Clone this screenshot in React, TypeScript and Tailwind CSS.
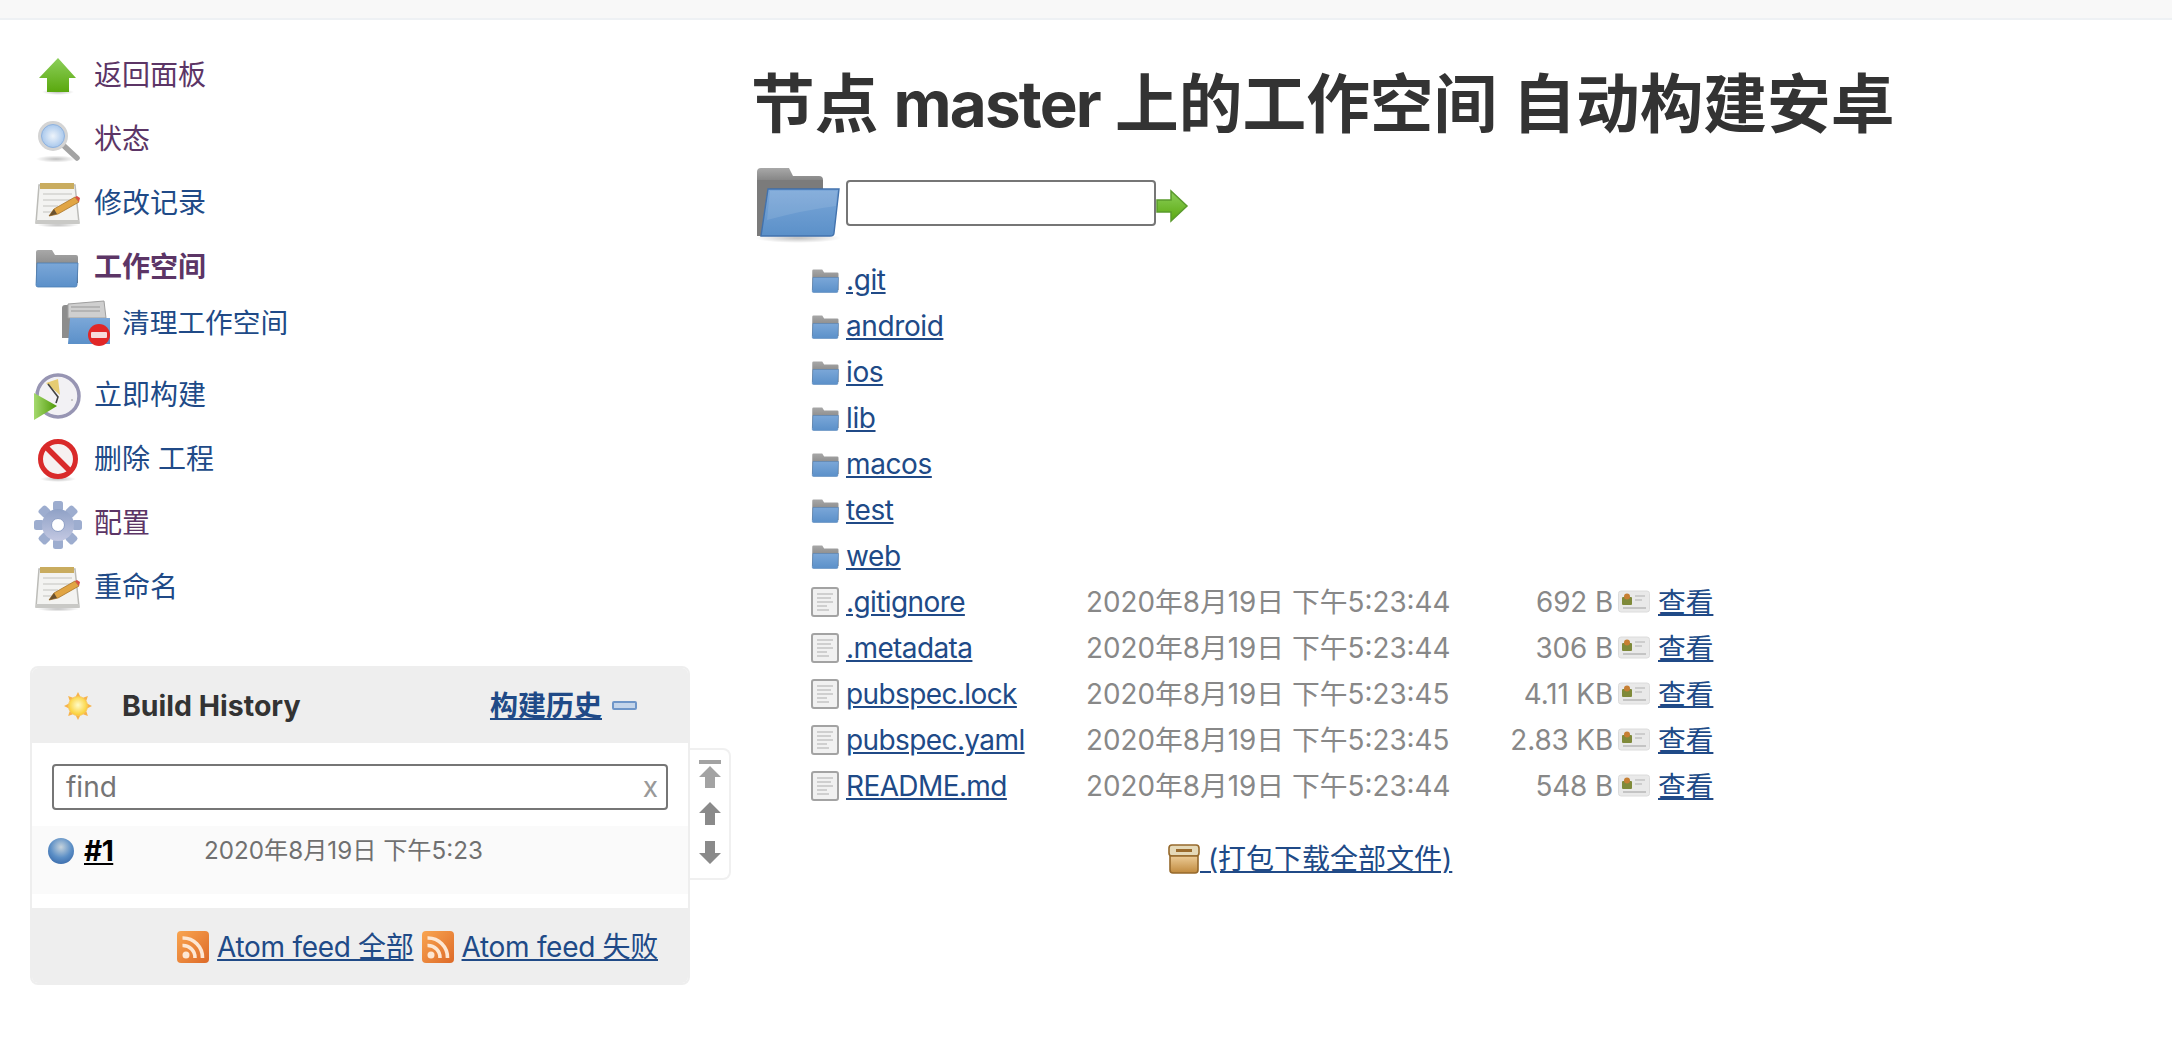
import React from "react";

const soft = "shrink-0 overflow-visible blur-[0.35px]";

function Defs() {
  return (
    <svg width="0" height="0" className="absolute">
      <defs>
        <linearGradient id="gGreen" x1="0" y1="0" x2="0" y2="1">
          <stop offset="0" stopColor="#8ccf5a" />
          <stop offset="1" stopColor="#5aa80e" />
        </linearGradient>
        <linearGradient id="gGreenH" x1="0" y1="0" x2="1" y2="0">
          <stop offset="0" stopColor="#a5d96e" />
          <stop offset="1" stopColor="#4e9a06" />
        </linearGradient>
        <linearGradient id="gFolder" x1="0" y1="0" x2="0" y2="1">
          <stop offset="0" stopColor="#7ba7d8" />
          <stop offset="1" stopColor="#5b90c9" />
        </linearGradient>
        <linearGradient id="gBack" x1="0" y1="0" x2="0" y2="1">
          <stop offset="0" stopColor="#a8a8a8" />
          <stop offset="1" stopColor="#6b6b6b" />
        </linearGradient>
        <linearGradient id="gGear" x1="0" y1="0" x2="0" y2="1">
          <stop offset="0" stopColor="#8fa1c6" />
          <stop offset="1" stopColor="#c3c8e2" />
        </linearGradient>
        <linearGradient id="gBox" x1="0" y1="0" x2="0" y2="1">
          <stop offset="0" stopColor="#eccb96" />
          <stop offset="1" stopColor="#c08a3e" />
        </linearGradient>
        <linearGradient id="gRss" x1="0" y1="0" x2="1" y2="1">
          <stop offset="0" stopColor="#f9a550" />
          <stop offset="1" stopColor="#dd6a28" />
        </linearGradient>
        <radialGradient id="gSun" cx="0.5" cy="0.45" r="0.5">
          <stop offset="0" stopColor="#fffbc8" />
          <stop offset="1" stopColor="#fbd23c" />
        </radialGradient>
        <radialGradient id="gLens" cx="0.5" cy="0.5" r="0.5">
          <stop offset="0" stopColor="#eef4fb" />
          <stop offset="1" stopColor="#a9c8ec" />
        </radialGradient>
        <radialGradient id="gShadow" cx="0.5" cy="0.5" r="0.5">
          <stop offset="0" stopColor="#000" stopOpacity="0.25" />
          <stop offset="1" stopColor="#000" stopOpacity="0" />
        </radialGradient>
      </defs>
    </svg>
  );
}

function UpIcon() {
  return (
    <svg width="48" height="48" viewBox="0 0 48 48" className={soft}>
      <ellipse cx="24" cy="41" rx="16" ry="3" fill="url(#gShadow)" />
      <path d="M24 7 L42 27 H35 V41 H13 V27 H5 Z" fill="url(#gGreen)" />
    </svg>
  );
}

function SearchIcon() {
  return (
    <svg width="48" height="48" viewBox="0 0 48 48" className={soft}>
      <ellipse cx="22" cy="44" rx="20" ry="3.5" fill="url(#gShadow)" />
      <path d="M29 30 L43 43" stroke="#a3a3a3" strokeWidth="5.5" strokeLinecap="round" />
      <circle cx="19" cy="21" r="15" fill="#d4d4d4" />
      <circle cx="19" cy="21" r="11.5" fill="url(#gLens)" stroke="#8fb2de" strokeWidth="1" />
    </svg>
  );
}

function NotepadIcon() {
  return (
    <svg width="48" height="48" viewBox="0 0 48 48" className={soft}>
      <ellipse cx="24" cy="46" rx="21" ry="2.5" fill="url(#gShadow)" />
      <path d="M5 6 H41 L45 44 H2 Z" fill="#f3f3f1" stroke="#bcbcb8" strokeWidth="1.5" />
      <rect x="2" y="41" width="43" height="4" fill="#c9c9c6" />
      <rect x="6" y="4" width="34" height="6" fill="#c9ac5f" />
      <path d="M9 15 H38 M9 21 H38 M9 27 H24 M9 33 H20" stroke="#d3d3d0" strokeWidth="1.6" />
      <path d="M15 37 L20 30 L41 18 L45 23 L24 35 Z" fill="#e1a544" stroke="#a9752a" strokeWidth="0.8" />
      <path d="M41 18 L45 23 L46 19 L43 17 Z" fill="#d94f45" />
      <path d="M15 37 L20 30 L23 35 Z" fill="#6a5230" />
    </svg>
  );
}

function FolderIcon({ size = 48 }: { size?: number }) {
  return (
    <svg width={size} height={size} viewBox="0 0 48 48" className={soft}>
      <path d="M2 9 Q2 7 4 7 H18 L21 12 H42 Q44 12 44 14 V40 H2 Z" fill="url(#gBack)" />
      <path d="M3 20 H44 L43 42 Q43 44 41 44 H4 Q2 44 2 42 Z" fill="url(#gFolder)" stroke="#4a7db5" strokeWidth="0.8" />
    </svg>
  );
}

function BigFolderIcon() {
  return (
    <svg width="88" height="78" viewBox="0 0 88 78" className={soft}>
      <ellipse cx="44" cy="72" rx="43" ry="5" fill="url(#gShadow)" />
      <path d="M3 6 Q3 2 7 2 H35 L39 10 H65 Q69 10 69 14 V24 H3 Z" fill="url(#gBack)" />
      <path d="M3 14 H69 V22 H16 L8 70 H3 Z" fill="#7b7b7b" />
      <path d="M14 23 H85 L80 67 Q80 70 76 70 H7 Z" fill="url(#gFolder)" stroke="#4272ad" strokeWidth="1.4" />
      <path d="M16 25 H83 L82 40 Q50 44 13 54 Z" fill="#fff" opacity="0.1" />
    </svg>
  );
}

function ClearFolderIcon() {
  return (
    <svg width="48" height="46" viewBox="0 0 48 46" className={soft}>
      <path d="M0 8 Q0 5 3 5 H8 V38 H0 Z" fill="#8d8d8d" />
      <path d="M6 4 L42 1 L44 18 H6 Z" fill="#cfcfcf" stroke="#9e9e9e" strokeWidth="1" />
      <path d="M9 7 H38 M9 11 H38" stroke="#b4b4b4" strokeWidth="2" />
      <path d="M8 18 H48 V44 H6 Z" fill="url(#gFolder)" />
      <circle cx="37" cy="35" r="11" fill="#e12727" />
      <rect x="29" y="32" width="16" height="6" rx="1" fill="#f6dcdc" />
    </svg>
  );
}

function BuildIcon() {
  return (
    <svg width="48" height="48" viewBox="0 0 48 48" className={soft}>
      <circle cx="24" cy="25" r="21" fill="#f2f1f4" stroke="#9795b3" strokeWidth="3.5" />
      <path d="M12 12 L24 8 L26 24 Z" fill="#e6cc72" />
      <path d="M14 13 L24 26 L22 32" fill="none" stroke="#444" strokeWidth="1.6" />
      <circle cx="38" cy="29" r="1" fill="#bbb" />
      <path d="M0 22 L23 35 L0 49 Z" fill="url(#gGreenH)" />
    </svg>
  );
}

function DeleteIcon() {
  return (
    <svg width="48" height="48" viewBox="0 0 48 48" className={soft}>
      <ellipse cx="24" cy="44" rx="18" ry="3" fill="url(#gShadow)" />
      <circle cx="24" cy="24" r="17.5" fill="#f6f1f1" stroke="#d92a2a" strokeWidth="5" />
      <path d="M12 12 L36 36" stroke="#d92a2a" strokeWidth="5.5" />
    </svg>
  );
}

function GearIcon() {
  const teeth = [0, 45, 90, 135, 180, 225, 270, 315];
  return (
    <svg width="48" height="48" viewBox="0 0 48 48" className={soft}>
      {teeth.map((a) => (
        <rect key={a} x="19" y="2" width="10" height="10" rx="2.5" transform={`rotate(${a} 24 26)`} fill="#9dadcf" />
      ))}
      <circle cx="24" cy="26" r="16" fill="url(#gGear)" />
      <circle cx="24" cy="26" r="6.5" fill="#fff" stroke="#8e9fc5" strokeWidth="1" />
    </svg>
  );
}

function FileIcon() {
  return (
    <svg width="28" height="30" viewBox="0 0 28 30" className={soft}>
      <rect x="1" y="1" width="26" height="28" rx="2" fill="#f1f1f1" stroke="#a3a3a3" strokeWidth="2" />
      <path d="M6 7 H22 M6 11 H20 M6 15 H22 M6 19 H16 M6 23 H18" stroke="#cfcfcf" strokeWidth="2" />
    </svg>
  );
}

function CardIcon() {
  return (
    <svg width="32" height="26" viewBox="0 0 32 26" className={soft}>
      <rect x="0.5" y="2" width="31" height="21" rx="2.5" fill="#e9e9e9" stroke="#dcdcdc" />
      <rect x="4" y="8" width="10" height="8" rx="1" fill="#7f8a3a" />
      <circle cx="9" cy="7.5" r="3" fill="#c77f33" />
      <path d="M17 7 H27 M17 11 H24" stroke="#c4c4c4" strokeWidth="1.4" />
      <path d="M5 19 H28" stroke="#b5b5b5" strokeWidth="1.4" />
    </svg>
  );
}

function GoIcon() {
  return (
    <svg width="32" height="32" viewBox="0 0 32 32" className={soft}>
      <path d="M1 10 H15 V1 L31 16 L15 31 V22 H1 Z" fill="url(#gGreen)" stroke="#5a9a2c" strokeWidth="1.5" />
    </svg>
  );
}

function BoxIcon() {
  return (
    <svg width="32" height="30" viewBox="0 0 32 30" className={soft}>
      <rect x="1" y="1" width="30" height="11" rx="3" fill="#e5d9b8" stroke="#96692c" strokeWidth="1.6" />
      <rect x="8" y="5" width="16" height="3" fill="#9a6b2d" />
      <path d="M2 12 H30 V26 Q30 29 27 29 H5 Q2 29 2 26 Z" fill="url(#gBox)" stroke="#96692c" strokeWidth="1.6" />
    </svg>
  );
}

function SunIcon() {
  const rays = [0, 45, 90, 135, 180, 225, 270, 315];
  return (
    <svg width="28" height="28" viewBox="0 0 28 28" className={soft}>
      {rays.map((a) => (
        <path key={a} d="M11 6 L14 0 L17 6 Z" fill="#f7b34a" transform={`rotate(${a} 14 14)`} />
      ))}
      <circle cx="14" cy="14" r="9.5" fill="url(#gSun)" stroke="#f8c65a" />
    </svg>
  );
}

function RssIcon() {
  return (
    <svg width="32" height="32" viewBox="0 0 32 32" className={soft}>
      <rect width="32" height="32" rx="4" fill="url(#gRss)" />
      <circle cx="9" cy="24" r="3.5" fill="#fde7d3" />
      <path d="M5.5 14.5 A12 12 0 0 1 18 27" fill="none" stroke="#fde7d3" strokeWidth="3.6" />
      <path d="M5.5 7 A19.5 19.5 0 0 1 25.5 27" fill="none" stroke="#fde7d3" strokeWidth="3.6" />
    </svg>
  );
}

function ScrollTop() {
  return (
    <svg width="24" height="28" viewBox="0 0 24 28" className={soft}>
      <rect x="1" y="0" width="22" height="4" fill="#a3a3a3" />
      <path d="M12 6 L23 17 H17 V28 H7 V17 H1 Z" fill="#a3a3a3" />
    </svg>
  );
}

function ScrollUp() {
  return (
    <svg width="24" height="24" viewBox="0 0 24 24" className={soft}>
      <path d="M12 0 L23 11 H17 V23 H7 V11 H1 Z" fill="#8a8a8a" />
    </svg>
  );
}

function ScrollDown() {
  return (
    <svg width="24" height="24" viewBox="0 0 24 24" className={soft}>
      <path d="M12 24 L23 13 H17 V1 H7 V13 H1 Z" fill="#8a8a8a" />
    </svg>
  );
}

const tasks = [
  { icon: <UpIcon />, label: "返回面板", purple: true },
  { icon: <SearchIcon />, label: "状态", purple: true },
  { icon: <NotepadIcon />, label: "修改记录" },
  { icon: <FolderIcon />, label: "工作空间", purple: true, bold: true },
];

const tasksAfter = [
  { icon: <BuildIcon />, label: "立即构建" },
  { icon: <DeleteIcon />, label: "删除 工程" },
  { icon: <GearIcon />, label: "配置", purple: true },
  { icon: <NotepadIcon />, label: "重命名" },
];

type Task = { icon: React.ReactNode; label: string; purple?: boolean; bold?: boolean };

function TaskRow({ t }: { t: Task }) {
  return (
    <div className="flex h-[64px] items-center gap-[12px] pl-[34px]">
      {t.icon}
      <a className={`${t.purple ? "text-[#5c3566]" : "text-[#204a87]"} ${t.bold ? "font-bold" : ""}`}>{t.label}</a>
    </div>
  );
}

const dirs = [".git", "android", "ios", "lib", "macos", "test", "web"];
const files = [
  { name: ".gitignore", date: "2020年8月19日 下午5:23:44", size: "692 B" },
  { name: ".metadata", date: "2020年8月19日 下午5:23:44", size: "306 B" },
  { name: "pubspec.lock", date: "2020年8月19日 下午5:23:45", size: "4.11 KB" },
  { name: "pubspec.yaml", date: "2020年8月19日 下午5:23:45", size: "2.83 KB" },
  { name: "README.md", date: "2020年8月19日 下午5:23:44", size: "548 B" },
];

export default function App() {
  return (
    <div className="min-h-screen bg-white text-[28px] leading-[36px] text-[#333] [font-family:Inter,'Noto_Sans_CJK_SC',sans-serif]">
      <Defs />
      <div className="h-[20px] border-b-2 border-[#eef1f4] bg-[#f8f8f8]" />
      <div className="flex">
        <aside className="w-[754px] shrink-0 pt-[23px]">
          {tasks.map((t) => (
            <TaskRow key={t.label} t={t} />
          ))}
          <div className="flex h-[48px] items-center gap-[12px] pl-[62px]">
            <ClearFolderIcon />
            <a className="text-[27.7px] text-[#204a87]">清理工作空间</a>
          </div>
          <div className="mt-[16px]">
            {tasksAfter.map((t) => (
              <TaskRow key={t.label} t={t} />
            ))}
          </div>

          <div className="relative ml-[30px] mt-[47px] w-[660px]">
            <div className="overflow-hidden rounded-lg border-2 border-[#eee]">
              <div className="flex h-[75px] items-center bg-[#eee] pl-[32px] pr-[51px]">
                <SunIcon />
                <span className="ml-[30px] text-[28.5px] font-bold">Build History</span>
                <a className="ml-auto font-bold text-[#204a87] underline">构建历史</a>
                <span className="ml-[10px] h-[9px] w-[25px] rounded-[2px] border-2 border-[#6f96c8] bg-[#c4d5ea]" />
              </div>
              <div className="h-[21px]" />
              <div className="mx-[20px] flex h-[46px] items-center justify-between rounded border-2 border-[#767676] pl-[12px] pr-[8px] text-[#757575]">
                <span>find</span>
                <span className="text-[#999]">x</span>
              </div>
              <div className="mt-[16px] flex h-[68px] items-start bg-[#fafafa] pt-[7px]">
                <span className="ml-[16px] mt-[5px] h-[26px] w-[26px] rounded-full [background:radial-gradient(circle_at_50%_35%,#c6d3dc,#5c8fc6_50%,#2a5a9e)]" />
                <a className="ml-[10px] w-[120px] font-bold tracking-[-0.5px] text-black underline">#1</a>
                <span className="text-[24.2px] text-[#707070]">2020年8月19日 下午5:23</span>
              </div>
              <div className="h-[14px]" />
              <div className="flex h-[75px] items-center justify-end bg-[#eee] pr-[30px] pt-[3px]">
                <RssIcon />
                <a className="ml-[8px] tracking-[-0.3px] text-[#204a87] underline">Atom feed 全部</a>
                <span className="ml-[8px]"><RssIcon /></span>
                <a className="ml-[8px] tracking-[-0.3px] text-[#204a87] underline">Atom feed 失败</a>
              </div>
            </div>
            <div className="absolute left-full top-[82px] flex h-[132px] w-[41px] flex-col items-center gap-[14px] rounded-r-lg border-2 border-l-0 border-[#f0f0f0] pt-[10px]">
              <ScrollTop />
              <ScrollUp />
              <ScrollDown />
            </div>
          </div>
        </aside>

        <main className="min-w-0 flex-1 pt-[46px]">
          <h1 className="-ml-[3px] whitespace-nowrap text-[63.7px] font-bold leading-[76px]">
            节点 <span className="tracking-[-1.8px]">master</span> 上的工作空间 自动构建安卓
          </h1>
          <div className="mt-[24px] flex h-[79px] items-start">
            <BigFolderIcon />
            <div className="ml-[4px] mt-[14px] h-[46px] w-[310px] rounded border-2 border-[#767676] bg-white" />
            <span className="mt-[24px]"><GoIcon /></span>
          </div>
          <div className="mt-[12px] pl-[57px]">
            {dirs.map((d) => (
              <div key={d} className="flex h-[46px] items-center">
                <FolderIcon size={30} />
                <a className="ml-[5px] tracking-[-0.4px] text-[#204a87] underline">{d}</a>
              </div>
            ))}
            {files.map((f) => (
              <div key={f.name} className="flex h-[46px] items-center">
                <FileIcon />
                <a className="ml-[7px] w-[240px] tracking-[-0.6px] text-[#204a87] underline">{f.name}</a>
                <span className="w-[365px] whitespace-nowrap text-[27.8px] text-[#888]">{f.date}</span>
                <span className="w-[162px] text-right text-[27.8px] tracking-[-0.1px] text-[#888]">{f.size}</span>
                <span className="ml-[5px]"><CardIcon /></span>
                <a className="ml-[8px] text-[27.7px] text-[#204a87] underline">查看</a>
              </div>
            ))}
          </div>
          <div className="ml-[414px] mt-[27px] flex h-[46px] items-center">
            <BoxIcon />
            <a className="text-[#204a87] underline">&nbsp;(打包下载全部文件)</a>
          </div>
        </main>
      </div>
    </div>
  );
}
